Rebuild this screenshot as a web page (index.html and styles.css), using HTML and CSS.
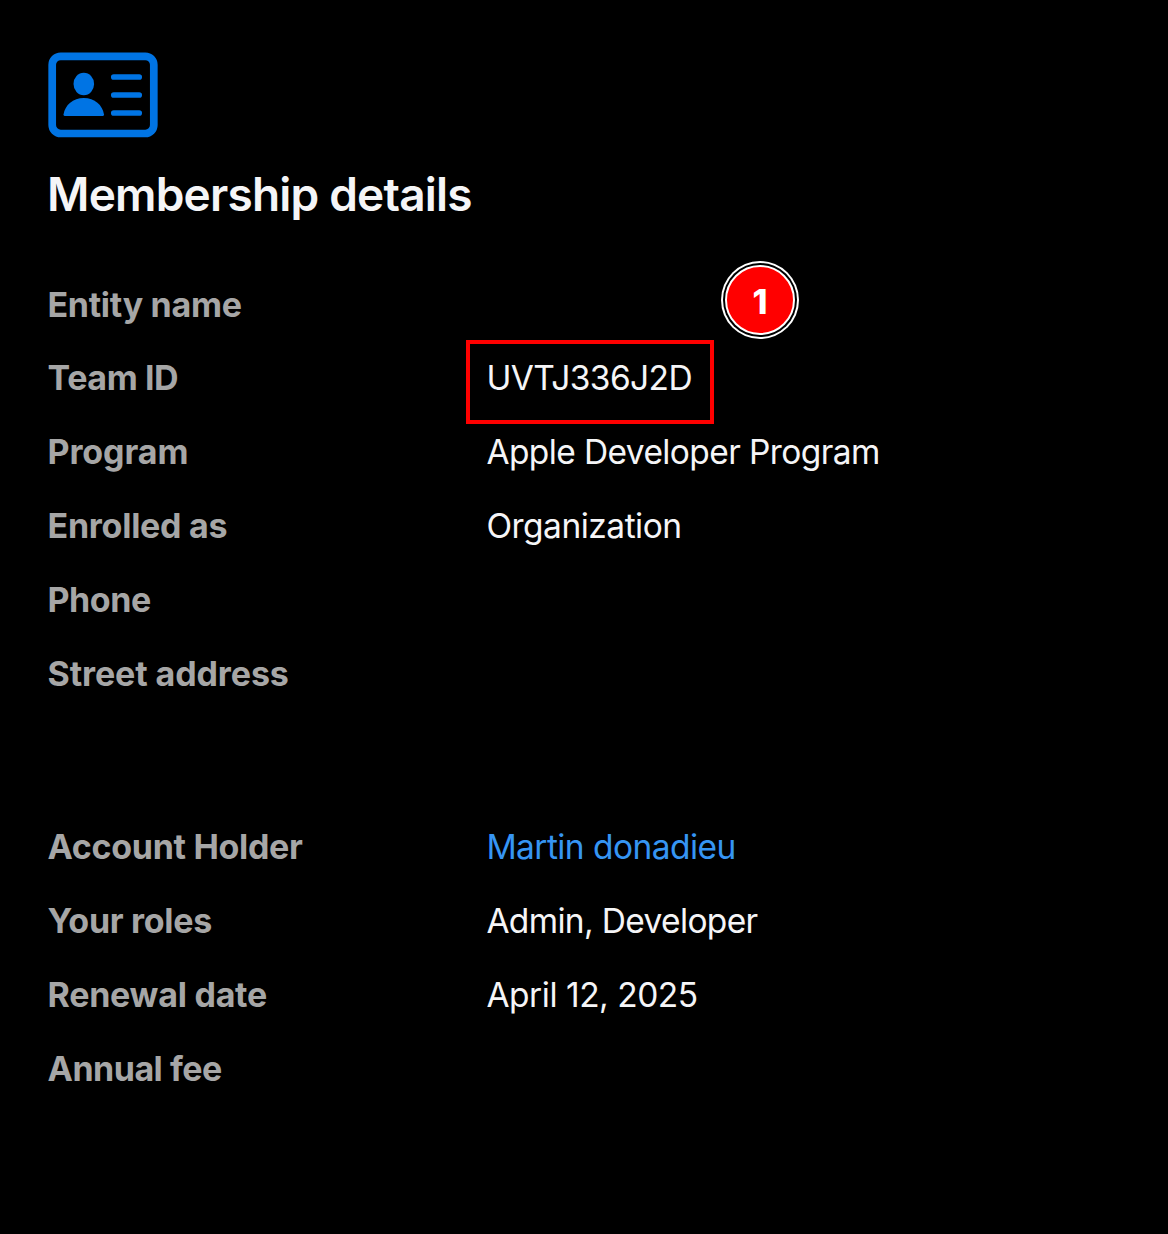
FILE: index.html
```html
<!DOCTYPE html>
<html lang="en">
<head>
<meta charset="utf-8">
<title>Membership details</title>
<link rel="stylesheet" href="styles.css">
</head>
<body>
<main class="page">
  <svg class="card-icon" viewBox="0 0 110 86" aria-hidden="true">
    <rect x="4.200" y="4.300" width="101.600" height="77.200" rx="8.500" fill="none" stroke="currentColor" stroke-width="7.700"/>
    <ellipse cx="35.800" cy="32" rx="10.300" ry="11.300" fill="currentColor"/>
    <path d="M15.500 62.500C17 53 25 46 35.800 46S54.500 53 56 62.500Q56 64 54.500 64H17Q15.500 64 15.500 62.500Z" fill="currentColor"/>
    <path d="M65.800 25H91.200M65.800 43H91.200M65.800 61H91.200" stroke="currentColor" stroke-width="5.700" stroke-linecap="round"/>
  </svg>
  <h1 class="title">Membership details</h1>
  <dl class="details">
    <div class="row first"><dt><span class="t entity">Entity name</span></dt><dd></dd></div>
    <div class="row"><dt><span class="t team">Team ID</span></dt><dd class="marked"><span class="t id">UVTJ336J2D</span><span class="frame"></span><span class="badge">1</span></dd></div>
    <div class="row"><dt><span class="t program">Program</span></dt><dd><span class="t adp">Apple Developer Program</span></dd></div>
    <div class="row"><dt><span class="t enrolled">Enrolled as</span></dt><dd><span class="t org">Organization</span></dd></div>
    <div class="row"><dt><span class="t phone">Phone</span></dt><dd></dd></div>
    <div class="row"><dt><span class="t street">Street address</span></dt><dd></dd></div>
  </dl>
  <dl class="details account">
    <div class="row"><dt><span class="t holder">Account Holder</span></dt><dd><a class="t link">Martin donadieu</a></dd></div>
    <div class="row"><dt><span class="t roles">Your roles</span></dt><dd><span class="t admin">Admin, Developer</span></dd></div>
    <div class="row"><dt><span class="t renewal">Renewal date</span></dt><dd><span class="t date">April 12, 2025</span></dd></div>
    <div class="row"><dt><span class="t fee">Annual fee</span></dt><dd></dd></div>
  </dl>
</main>
</body>
</html>
```
FILE: styles.css
```css
* { box-sizing: border-box; }
html, body { margin: 0; background: #000; }
.page {
  min-height: 1234px;
  padding: 52px 47px 0;
  color: #f5f5f7;
  font-family: Inter, "Liberation Sans", sans-serif;
}
.card-icon { display: block; width: 110px; height: 86px; margin-left: 1px; color: #0074e4; }
.title {
  margin: 28px 0 0;
  font-size: 46px;
  line-height: 56px;
  font-weight: 600;
  letter-spacing: -0.8px;
  white-space: nowrap;
}
.details { margin: 45px 0 0; }
.account { margin-top: 99px; }
.row { display: grid; grid-template-columns: 439px 1fr; height: 74px; align-items: center; }
.first { height: 73px; }
dt { color: #a6a6a6; font-size: 34px; line-height: 42px; font-weight: 650; padding: 2px 0 0 0.5px; }
dd { margin: 0; padding: 2px 0 0 0.4px; font-size: 33.5px; line-height: 42px; font-weight: 400; }
.t { white-space: nowrap; letter-spacing: -0.3px; }
.team { letter-spacing: -0.4px; }
.program { letter-spacing: -0.1px; }
.enrolled { letter-spacing: -0.25px; }
.phone { letter-spacing: -0.45px; }
.street { letter-spacing: -0.1px; }
.renewal { letter-spacing: -0.25px; }
.fee { letter-spacing: -0.5px; }
.id { letter-spacing: -0.6px; }
.adp { letter-spacing: -0.6px; }
.org { letter-spacing: -0.5px; }
.link { color: #3695f3; letter-spacing: -0.56px; }
.admin { letter-spacing: -0.65px; }
.date { letter-spacing: -0.47px; }
.marked { position: relative; }
.frame { position: absolute; left: -20px; top: -15px; width: 248px; height: 84px; border: 4px solid #f00; }
.badge {
  position: absolute;
  left: 239px;
  top: -90px;
  width: 70px;
  height: 70px;
  border: 2px solid #fff;
  border-radius: 50%;
  background: #f00;
  box-shadow: 0 0 0 2px #000, 0 0 0 4px #fff;
  color: #fff;
  font: 800 34px/69px Inter, sans-serif;
  text-align: center;
}
```
